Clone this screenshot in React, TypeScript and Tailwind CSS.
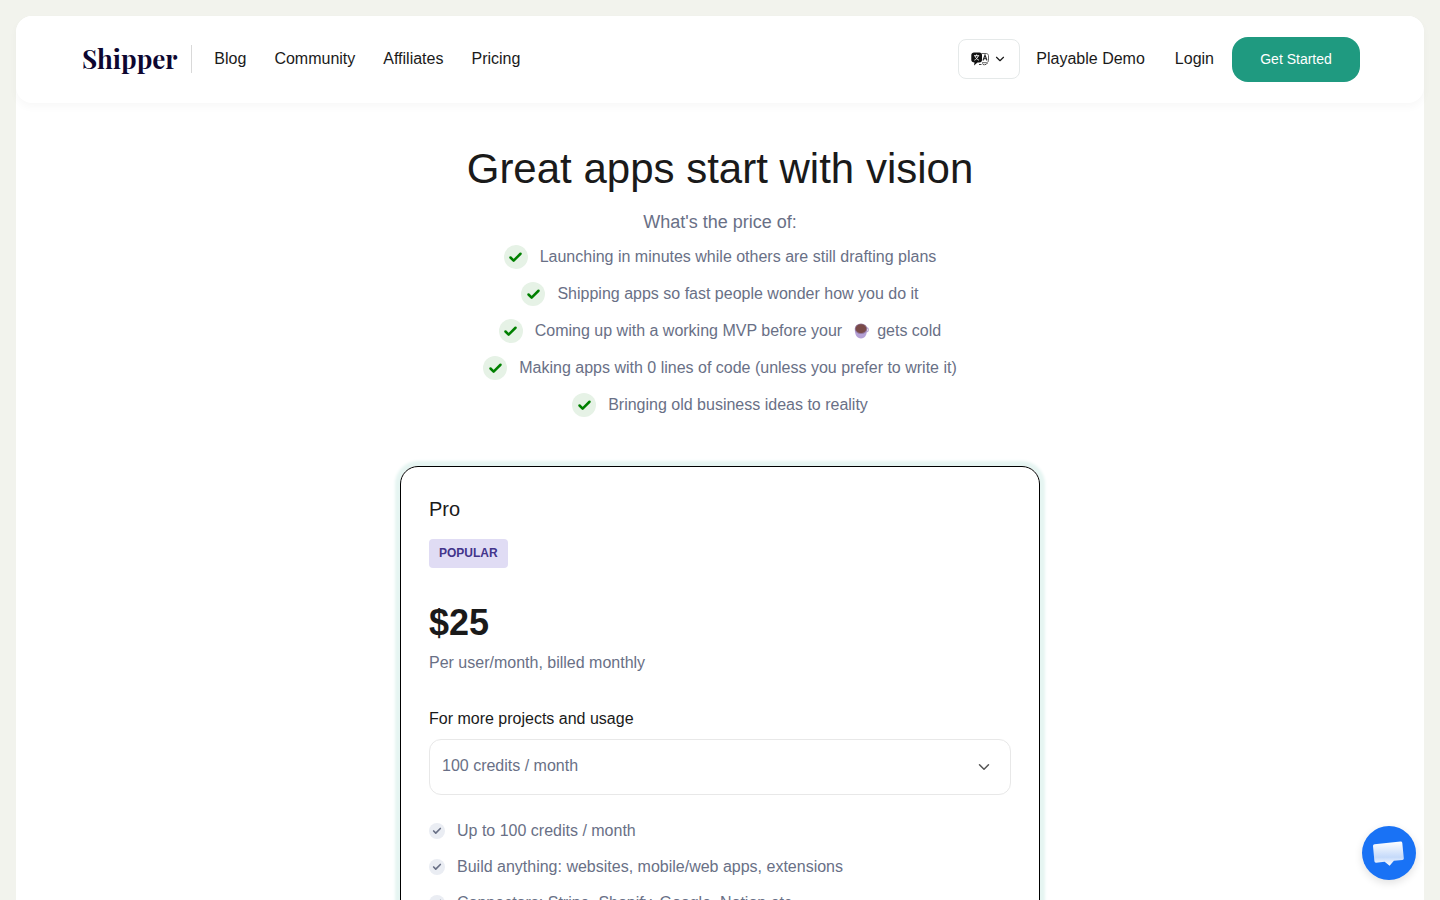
import type { ReactNode } from "react";
import { Check, ChevronDown } from "lucide-react";

const navLinks = ["Blog", "Community", "Affiliates", "Pricing"];

const features = [
  "Up to 100 credits / month",
  "Build anything: websites, mobile/web apps, extensions",
  "Connectors: Stripe, Shopify, Google, Notion etc.",
];

const CoffeeIcon = () => (
  <svg viewBox="0 0 15 16" className="mr-2 ml-3 h-4 w-[15px]" aria-hidden="true">
    <circle cx="12.2" cy="6.8" r="2.1" fill="none" stroke="#b9a8d3" strokeWidth="1.2" />
    <path d="M.8 6C.8 12 3 15.500 7 15.500S13 12 13 6Z" fill="#b5a1d6" />
    <ellipse cx="7" cy="5.800" rx="6.200" ry="5.200" fill="#94789c" />
    <ellipse cx="7" cy="5.700" rx="5.300" ry="4.400" fill="#7a4a48" />
  </svg>
);

const TranslateIcon = () => (
  <svg viewBox="0 0 18 14" className="h-[14px] w-[18px]" aria-hidden="true">
    <path
      d="M10.500 1.500h4.800c1.200 0 2.200 1 2.200 2.200v4.800c0 1.200-1 2.200-2.200 2.200H11"
      fill="none"
      stroke="#555"
      strokeWidth="0.9"
    />
    <path d="m12 8.500 2-5.500 2 5.500m-3.400-1.800h2.800" fill="none" stroke="#222" strokeWidth="1.100" />
    <path
      d="M3 .5h5.500C10 .5 11 1.500 11 3v5c0 1.500-1 2.500-2.500 2.500H6.500L3 13.500l.5-3C1.500 10.500.3 9.500.3 8V3C.3 1.500 1.500.5 3 .5Z"
      fill="#111"
    />
    <path
      d="M3 3.700h5.200M5.600 2.400v1.300M7.300 3.700c-.4 2-2.100 3.700-3.900 4.500M4 3.700c.5 2 2 3.700 3.900 4.500"
      fill="none"
      stroke="#fff"
      strokeWidth="0.9"
    />
    <path d="M8 12.500h2.500m3 0h1.500l1.500-1.500M11.500 11.500l1.500 1.800" fill="none" stroke="#444" strokeWidth="1" />
  </svg>
);

const ChatIcon = () => (
  <svg viewBox="1 -1 32 28" className="h-7 w-8" aria-hidden="true">
    <defs>
      <linearGradient id="bubble" x1="0" y1="0" x2="0" y2="1">
        <stop offset="0" stopColor="#fff" />
        <stop offset="0.65" stopColor="#c5dafa" />
        <stop offset="1" stopColor="#fff" />
      </linearGradient>
    </defs>
    <path
      d="M2.500 4.300 28.500 1.500q1.600-.1 1.800 1.400l1.500 15.300q.1 1.500-1.400 1.700l-8.500.9-4.300 4.900-5-3.900-8.500.9q-1.500.1-1.700-1.400L1 6Q.900 4.500 2.500 4.300Z"
      fill="url(#bubble)"
    />
  </svg>
);

const Header = () => (
  <header className="flex h-[87px] items-center justify-between rounded-2xl bg-white pr-16 pl-[66px] shadow-[0_4px_8px_rgba(0,0,0,0.03)]">
    <div className="flex items-center pb-0.5">
      <a
        href="#"
        className="font-['Playfair_Display','Liberation_Serif',serif] text-[26px] leading-8 font-bold text-[#0d0630]"
      >
        Shipper
      </a>
      <div className="mr-[22px] ml-[14px] h-7 w-px bg-[#d9d9d9]" />
      <nav className="flex gap-7">
        {navLinks.map((link) => (
          <a key={link} href="#">
            {link}
          </a>
        ))}
      </nav>
    </div>
    <div className="flex items-center">
      <div className="flex items-center pb-0.5">
        <button
          type="button"
          aria-label="Change language"
          className="mr-4 flex h-10 w-[62px] items-center justify-center gap-1 rounded-lg border border-[#e5e9e9]"
        >
          <TranslateIcon />
          <ChevronDown className="size-3.5" />
        </button>
        <a href="#" className="mr-[30px]">
          Playable Demo
        </a>
        <a href="#" className="mr-[18px]">
          Login
        </a>
      </div>
      <a
        href="#"
        className="flex h-[45px] w-32 items-center justify-center rounded-2xl bg-[#1f9a80] pb-0.5 text-sm font-medium text-white"
      >
        Get Started
      </a>
    </div>
  </header>
);

const Benefit = ({ children }: { children: ReactNode }) => (
  <li className="flex h-6 items-center justify-center gap-3">
    <span className="flex size-6 items-center justify-center rounded-full bg-[#e6f2e6] text-[#008000]">
      <Check className="size-[15px]" strokeWidth={4} />
    </span>
    <span className="flex items-center">{children}</span>
  </li>
);

const PricingCard = () => (
  <section className="mx-auto mt-[49px] max-w-[640px] rounded-[18px] border border-black px-7 pt-7 pb-10 shadow-[0_0_3px_5px_#e6f5f2]">
    <h2 className="text-xl leading-7">Pro</h2>
    <span className="mt-4 inline-block rounded-[4px] bg-[#e0dcf4] px-2.5 text-xs leading-[29px] font-semibold text-[#43348b]">
      POPULAR
    </span>
    <p className="mt-[33px] text-4xl leading-11 font-bold">$25</p>
    <p className="mt-1.5 text-[#697086]">Per user/month, billed monthly</p>
    <label htmlFor="credits" className="mt-8 block">
      For more projects and usage
    </label>
    <div className="mt-2 grid items-center">
      <select
        id="credits"
        className="col-start-1 row-start-1 h-14 w-full appearance-none rounded-xl border border-[#e8e8e8] bg-white px-3 pb-0.5 text-[#697086]"
      >
        <option>100 credits / month</option>
      </select>
      <ChevronDown className="pointer-events-none col-start-1 row-start-1 mr-[18px] size-[18px] justify-self-end text-[#555]" />
    </div>
    <ul className="mt-6 space-y-3 text-[#697086]">
      {features.map((feature) => (
        <li key={feature} className="flex items-center gap-3">
          <span className="flex size-4 items-center justify-center rounded-full bg-[#eaedf3]">
            <Check className="size-2.5" strokeWidth={4} />
          </span>
          {feature}
        </li>
      ))}
    </ul>
  </section>
);

export default function App() {
  return (
    <div className="min-h-screen bg-[#f2f3ed] px-4 pt-4 font-['Liberation_Sans',Arial,sans-serif] text-base text-[#1a1a1a]">
      <div className="min-h-screen rounded-t-2xl bg-white pb-20">
        <Header />
        <main className="pt-9">
          <div className="text-center text-[#697086]">
            <h1 className="text-[42px] leading-[60px] text-[#1a1a1a]">
              Great apps start with vision
            </h1>
            <p className="mt-[9px] text-lg leading-7">What's the price of:</p>
            <ul className="mt-[9px] space-y-[13px]">
              <Benefit>Launching in minutes while others are still drafting plans</Benefit>
              <Benefit>Shipping apps so fast people wonder how you do it</Benefit>
              <Benefit>
                Coming up with a working MVP before your <CoffeeIcon /> gets cold
              </Benefit>
              <Benefit>Making apps with 0 lines of code (unless you prefer to write it)</Benefit>
              <Benefit>Bringing old business ideas to reality</Benefit>
            </ul>
          </div>
          <PricingCard />
        </main>
      </div>
      <button
        type="button"
        aria-label="Open chat"
        className="fixed right-6 bottom-5 flex size-[54px] items-center justify-center rounded-full bg-[#1972f5] shadow-[0_3px_8px_rgba(0,0,0,0.12)]"
      >
        <ChatIcon />
      </button>
    </div>
  );
}
